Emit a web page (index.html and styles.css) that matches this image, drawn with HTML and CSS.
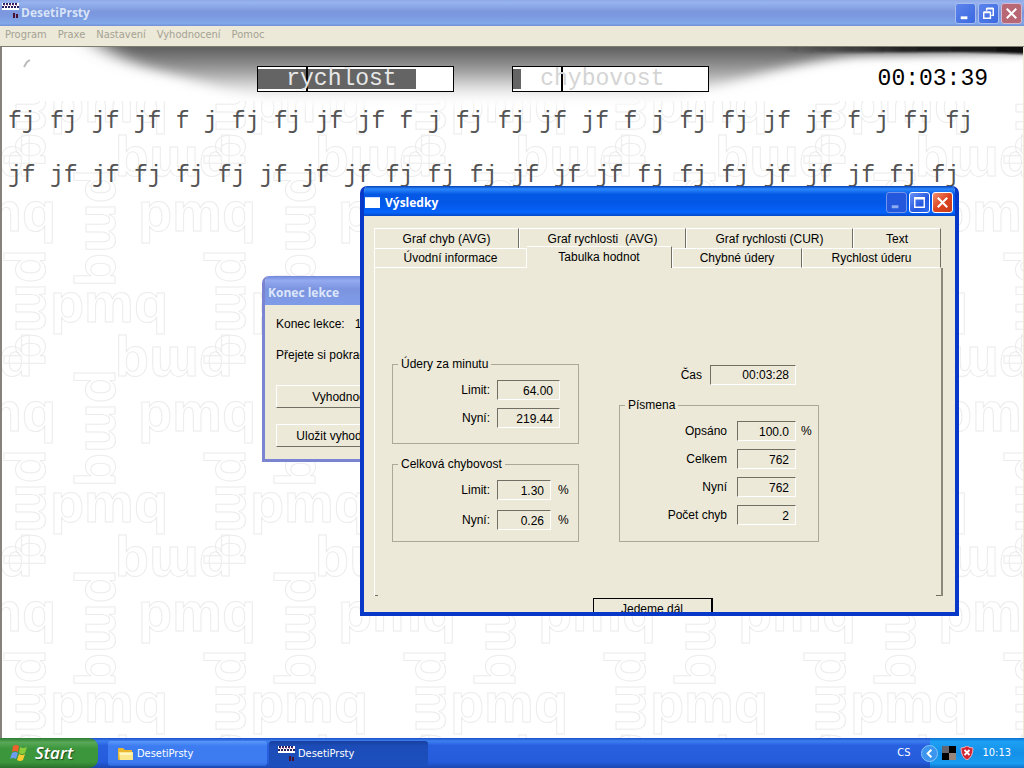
FILE: index.html
```html
<!DOCTYPE html>
<html lang="cs">
<head>
<meta charset="utf-8">
<title>DesetiPrsty</title>
<link rel="stylesheet" href="styles.css">
</head>
<body>
<svg class="defs" width="0" height="0" aria-hidden="true">
  <symbol id="app-icon" viewBox="0 0 18 16">
    <rect width="17" height="7" fill="#fff"/>
    <path d="M1 1h15M0 4h17" stroke="#26205e" stroke-width="2" stroke-dasharray="2 1"/>
    <path d="M2 2h14" stroke="#b0306a" stroke-dasharray="1 2"/>
    <path d="M11 10h2v5h-2zM14 11h2v4h-2z" fill="#4a1030"/>
  </symbol>
</svg>
<div class="desktop">
  <header class="titlebar titlebar-main">
    <svg class="app-icon" aria-hidden="true"><use href="#app-icon"/></svg>
    <h1 class="title">DesetiPrsty</h1>
    <div class="controls">
      <button class="ctl ctl-dim" aria-label="Minimalizovat"><svg viewBox="0 0 20 20"><path d="M5 13h7v3H5z" fill="#fff"/></svg></button>
      <button class="ctl ctl-dim" aria-label="Obnovit"><svg viewBox="0 0 20 20" fill="none" stroke="#fff"><path d="M8 7V5h7v7h-2M8 4.500h7" stroke-width="1.500"/><path d="M5 9h7v6H5zM5 8.500h7" stroke-width="1.500"/></svg></button>
      <button class="ctl ctl-close-dim" aria-label="Zavřít"><svg viewBox="0 0 20 20"><path d="M5 5l10 10M15 5L5 15" stroke="#fff" stroke-width="2.200"/></svg></button>
    </div>
  </header>
  <nav class="menubar">
    <a href="#">Program</a><a href="#">Praxe</a><a href="#">Nastavení</a><a href="#">Vyhodnocení</a><a href="#">Pomoc</a>
  </nav>

  <main class="workspace">
    <svg class="wallpaper" aria-hidden="true">
      <defs>
        <g id="motif" class="motif">
          <text id="pmq" x="0 34 84">pmq</text>
        </g>
        <g id="tile">
          <use href="#motif" transform="translate(138 31)"/>
          <use href="#motif" transform="translate(50 122)"/>
          <use href="#motif" transform="translate(233 147) rotate(180)"/>
          <use href="#motif" transform="translate(16 249) rotate(90)"/>
          <use href="#motif" transform="translate(86 169) rotate(90)"/>
        </g>
        <pattern id="paper" width="200" height="200" patternUnits="userSpaceOnUse" patternTransform="translate(-2 -47)">
          <use href="#tile"/>
          <use href="#tile" x="-200"/>
          <use href="#tile" y="-200"/>
          <use href="#tile" x="-200" y="-200"/>
        </pattern>
      </defs>
      <rect width="100%" height="100%" fill="url(#paper)"/>
    </svg>
    <svg class="smoke" viewBox="0 0 1022 64" preserveAspectRatio="none" aria-hidden="true">
      <defs>
        <linearGradient id="fade" gradientUnits="userSpaceOnUse" x1="0" y1="0" x2="0" y2="54">
          <stop offset="0" stop-color="#5c5c5c"/><stop offset=".45" stop-color="#a0a0a0"/><stop offset=".8" stop-color="#e8e8e8"/><stop offset="1" stop-color="#fff"/>
        </linearGradient>
        <linearGradient id="edge"><stop offset="0" stop-color="#222" stop-opacity="0"/><stop offset=".45" stop-color="#222"/><stop offset="1" stop-color="#080808"/></linearGradient>
        <filter id="soft" x="-10%" y="-50%" width="120%" height="200%"><feGaussianBlur stdDeviation="14 5"/></filter>
        <filter id="fine" x="-10%" y="-100%" width="120%" height="300%"><feGaussianBlur stdDeviation="2 1"/></filter>
      </defs>
      <rect width="1022" height="54" fill="#fff"/>
      <path d="M82 -16C105 6 125 17 165 26S230 50 300 58H640C700 48 760 20 850 9L1060 5V-16z" fill="url(#fade)" filter="url(#soft)"/>
      <path d="M780 -6H1050V9C970 2 900 7 780 5z" fill="url(#edge)" filter="url(#fine)"/>
      <path d="M22 20l3-5 3-2" fill="none" stroke="#bbb" stroke-width="2"/>
    </svg>

    <div class="practice">
      <div class="status">
        <div class="meter"><div class="meter-fill" style="width:81%"></div><div class="meter-mark"></div><span class="meter-label meter-label-speed">rychlost</span></div>
        <div class="meter"><div class="meter-fill" style="width:4%"></div><div class="meter-mark"></div><span class="meter-label meter-label-error">chybovost</span></div>
        <time class="clock">00:03:39</time>
      </div>
      <p class="line line-first">fj fj jf jf f j fj fj jf jf f j fj fj jf jf f j fj fj jf jf f j fj fj</p>
      <p class="line line-second">jf jf jf fj fj fj jf jf jf fj fj fj jf jf jf fj fj fj jf jf jf fj fj</p>
    </div>
  </main>

  <section class="window window-end" aria-label="Konec lekce">
    <header class="titlebar titlebar-end"><h2 class="title">Konec lekce</h2></header>
    <div class="end-body">
      <p>Konec lekce: &nbsp; 1</p>
      <p>Přejete si pokračovat?</p>
      <button class="push">Vyhodnocení</button>
      <button class="push">Uložit vyhodnocení</button>
    </div>
  </section>

  <section class="window window-results" aria-label="Výsledky">
    <header class="titlebar titlebar-results">
      <svg class="doc-icon" viewBox="0 0 16 12" aria-hidden="true"><rect width="15" height="11" fill="#fff"/><path d="M0 .5h15" stroke="#cfe0ff"/></svg>
      <h2 class="title">Výsledky</h2>
      <div class="controls">
        <button class="ctl ctl-off" aria-label="Minimalizovat"><svg viewBox="0 0 20 20"><path d="M5 13h7v3H5z" fill="#8fabf2"/></svg></button>
        <button class="ctl" aria-label="Maximalizovat"><svg viewBox="0 0 20 20"><path d="M5 5h10v10H5zM5 6h10" fill="none" stroke="#fff" stroke-width="1.500"/></svg></button>
        <button class="ctl ctl-close" aria-label="Zavřít"><svg viewBox="0 0 20 20"><path d="M5 5l10 10M15 5L5 15" stroke="#fff" stroke-width="2.200"/></svg></button>
      </div>
    </header>
    <div class="results-body">
      <div class="tabs" role="tablist">
        <div class="tab-row tab-row-back">
          <button class="tab" role="tab">Graf chyb (AVG)</button>
          <button class="tab" role="tab">Graf rychlosti &nbsp;(AVG)</button>
          <button class="tab" role="tab">Graf rychlosti (CUR)</button>
          <button class="tab" role="tab">Text</button>
        </div>
        <div class="tab-row tab-row-front">
          <button class="tab tab-intro" role="tab">Úvodní informace</button>
          <button class="tab tab-active" role="tab" aria-selected="true">Tabulka hodnot</button>
          <button class="tab" role="tab">Chybné údery</button>
          <button class="tab" role="tab">Rychlost úderu</button>
        </div>
      </div>
      <div class="panel" role="tabpanel">
        <div class="col">
          <fieldset class="group group-rate">
            <legend>Údery za minutu</legend>
            <label for="r1">Limit:</label><input id="r1" readonly value="64.00">
            <label for="r2">Nyní:</label><input id="r2" readonly value="219.44">
          </fieldset>
          <fieldset class="group group-error">
            <legend>Celková chybovost</legend>
            <label for="e1">Limit:</label><input id="e1" readonly value="1.30"><span>%</span>
            <label for="e2">Nyní:</label><input id="e2" readonly value="0.26"><span>%</span>
          </fieldset>
        </div>
        <div class="col">
          <div class="time-row"><label for="t1">Čas</label><input id="t1" readonly value="00:03:28"></div>
          <fieldset class="group group-letters">
            <legend>Písmena</legend>
            <label for="p1">Opsáno</label><input id="p1" readonly value="100.0"><span>%</span>
            <label for="p2">Celkem</label><input id="p2" readonly value="762">
            <label for="p3">Nyní</label><input id="p3" readonly value="762">
            <label for="p4">Počet chyb</label><input id="p4" readonly value="2">
          </fieldset>
        </div>
      </div>
      <button class="push push-default">Jedeme dál</button>
    </div>
  </section>

  <footer class="taskbar">
    <button class="start">
      <svg viewBox="0 0 20 20" aria-hidden="true"><path d="M3 3q3-2 6 0L8 9Q5 7 2 9z" fill="#f0602c"/><path d="M10 4q3 2 7 0l-2 6q-3 2-6 0z" fill="#8ccc3c"/><path d="M2 10q3-2 6 0l-2 6q-3-2-6 0z" fill="#6c9cf4"/><path d="M9 11q3 2 6 0l-2 6q-3 2-6 0z" fill="#f8cc30"/></svg>
      <span>Start</span>
    </button>
    <div class="tasks">
      <button class="task">
        <svg viewBox="0 0 18 16" aria-hidden="true"><path d="M1 3q0-1 1-1h4l2 2h7v10H2q-1 0-1-1z" fill="#e8b830"/><path d="M2 6h14v8H3z" fill="#fce88c"/><path d="M3 7h12v2H3z" fill="#fff6c0"/></svg>
        DesetiPrsty</button>
      <button class="task task-active"><svg viewBox="0 0 18 16" aria-hidden="true"><use href="#app-icon"/></svg>DesetiPrsty</button>
    </div>
    <span class="lang">CS</span>
    <div class="tray">
      <button class="chevron" aria-label="Zobrazit skryté ikony"><svg viewBox="0 0 18 18"><circle cx="9" cy="9" r="8.500" fill="#3c96f0" stroke="#8cc8fc"/><path d="M11 5L7 9l4 4" fill="none" stroke="#fff" stroke-width="2"/></svg></button>
      <svg class="tray-icon" viewBox="0 0 14 14" aria-hidden="true"><path d="M0 0h7v7H0z" fill="#64646c"/><path d="M7 0h7v7H7zM0 7h7v7H0z" fill="#000"/><path d="M7 7h7v7H7z" fill="#98867c"/></svg>
      <svg class="tray-icon" viewBox="0 0 14 14" aria-hidden="true"><path d="M7 0q3 2 6 2 0 9-6 12Q1 11 1 2q3 0 6-2z" fill="#d42434" stroke="#f0b0b0"/><path d="M4.500 4l5 5M9.500 4l-5 5" stroke="#fff" stroke-width="1.800"/></svg>
      <time>10:13</time>
    </div>
  </footer>
</div>
</body>
</html>
```
FILE: styles.css
```css
* { box-sizing: border-box; }
body { margin: 0; font: 12px/16px "Liberation Sans", Arial, sans-serif; color: #000; background: #fff; }
h1, h2, p { margin: 0; font-weight: inherit; font-size: inherit; }
button, input { font: inherit; color: inherit; border: 0; border-radius: 0; padding: 0; margin: 0; background: none; }
svg { display: block; }
.defs { position: absolute; }

.desktop { position: relative; display: flex; flex-direction: column; height: 100vh; overflow: hidden; }

/* Title bars */
.titlebar { display: flex; align-items: center; flex: none; color: #fff; }
.titlebar .title { flex: 1; font: bold 12px/16px "Open Sans", "Noto Sans", sans-serif; }
.titlebar-main { height: 26px; padding: 0 2px; gap: 1px; color: #d8e4f8; background: linear-gradient(#8fa9e6, #97b4ef 10%, #7c97dc 45%, #7b98e0 60%, #82a8e8 90%, #7290d8); }
.app-icon { width: 18px; height: 16px; margin-bottom: 4px; }
.controls { display: flex; gap: 2px; }
.ctl { width: 21px; height: 21px; border: 1px solid #fff; border-radius: 3px; background: linear-gradient(135deg, #6a92f4, #2458e0 60%, #2c6cf0); }
.ctl svg { width: 100%; height: 100%; }
.ctl-dim { border-color: #a8bcf0; background: linear-gradient(135deg, #5c84ec, #3a68e0); }
.ctl-off { border-color: #7494ec; background: #2358dc; }
.ctl-close { background: linear-gradient(135deg, #f09070, #dc4420 50%, #c83c1c); }
.ctl-close-dim { border-color: #d4b8d0; background: #b86874; }

.menubar { display: flex; flex: none; gap: 11px; height: 21px; padding: 1px 5px 0; background: #ece9d8; border-bottom: 1px solid #807c70; }
.menubar a { color: #a4a294; text-decoration: none; font: 11px/16px "DejaVu Sans Condensed", "Noto Sans", sans-serif; }

/* Typing area */
.workspace { position: relative; flex: 1; overflow: hidden; border-left: 2px solid #84827a; border-right: 1px solid #ece9d8; }
.wallpaper { position: absolute; inset: 0; width: 100%; height: 100%; }
.motif { font: bold 56px "Liberation Sans", Arial, sans-serif; fill: none; stroke: #ececec; stroke-width: 1; }
.smoke { position: absolute; top: 0; left: 0; width: 100%; height: 64px; }
.practice { position: relative; font: 23px/28px "Liberation Mono", "Courier New", monospace; }
.status { display: flex; align-items: center; padding: 18px 35px 0 25%; gap: 58px; }
.meter { position: relative; width: 197px; height: 26px; border: 1px solid #000; background: #fff; padding: 2px 0; }
.meter-fill { height: 20px; background: #646464; }
.meter-mark { position: absolute; top: 0; left: 48px; width: 2px; height: 24px; background: #000; }
.meter-label { position: absolute; inset: 0; line-height: 24px; }
.meter-label-speed { left: 28px; color: #e8e8e8; }
.meter-label-error { left: 27px; color: #d4d4d4; }
.clock { margin-left: auto; }
.line { color: #545454; text-align-last: justify; margin-left: 6px; }
.line-first { margin-top: 15px; margin-right: 50px; }
.line-second { margin-top: 26px; margin-right: 64px; }

/* Windows */
.window { position: absolute; overflow: hidden; display: flex; flex-direction: column; border-radius: 7px 7px 0 0; background: #ece9d8; }
.window-end { left: 262px; top: 276px; width: 180px; border: 3px solid #7b84d0; border-top: 0; }
.titlebar-end { height: 29px; padding: 4px 3px 0; color: #dce6fa; background: linear-gradient(#7088dc, #94aaf0 15%, #7c94e0 45%, #7f9ce8); }
.end-body { display: flex; flex-direction: column; padding: 11px 11px 12px; }
.end-body p { white-space: nowrap; margin-bottom: 15px; }
.push { height: 23px; text-align: center; white-space: nowrap; border: 1px solid; border-color: #fff #716f64 #716f64 #fff; }
.end-body .push { width: 142px; margin-top: 7px; }
.end-body .push + .push { margin-top: 16px; }

.window-results { left: 360px; top: 186px; width: 599px; height: 430px; border: 4px solid #0838c8; border-top: 0; }
.titlebar-results { height: 30px; padding: 3px 2px 0 1px; gap: 4px; background: linear-gradient(#0840b8, #2c88fc 10%, #0458e4 28%, #0458e8 60%, #0464fc 88%, #0448c8); }
.doc-icon { width: 16px; height: 12px; }
.results-body { flex: 1; min-height: 0; display: flex; flex-direction: column; padding: 12px 12px 0 10px; }
.tabs { flex: none; }
.tab-row { display: grid; height: 20px; padding-right: 2px; }
.tab-row-back { grid-template-columns: 145fr 167fr 167fr 88fr; }
.tab-row-front { grid-template-columns: 153fr 145fr 130fr 139fr; }
.tab { white-space: pre; border: 1px solid #fff; border-right-color: #716f64; border-bottom: 0; }
.tab-row-front .tab { border-bottom: 1px solid #fff; }
.tab-row-front .tab-intro { border-right-color: #fff; }
.tab-row-front .tab-active { margin-top: -2px; padding-bottom: 1px; background: #ece9d8; border-left: 0; border-bottom: 0; }
.panel { display: grid; grid-template-columns: 187px 200px; column-gap: 40px; padding: 88px 17px 0; height: 328px; flex: none; border-left: 1px solid #fff; border-right: 2px solid #8a887a; background: linear-gradient(#716f64, #716f64) left bottom / 3px 1px no-repeat, linear-gradient(#716f64, #716f64) right bottom / 5px 1px no-repeat; }
.col { display: flex; flex-direction: column; gap: 12px; }
.group { display: grid; align-content: start; align-items: center; margin: 0; min-width: 0; border: 1px solid #aca899; row-gap: 8px; }
.group legend { margin-left: 5px; padding: 0 3px; line-height: 16px; }
.group label { text-align: right; grid-column: 1; }
.panel input { width: 100%; height: 20px; padding: 1px 6px 0; text-align: right; border: 1px solid; border-color: #716f64 #fff #fff #716f64; outline: 0; }
.group-rate { grid-template-columns: 97px 63px; column-gap: 7px; padding: 8px 0 14px; height: 88px; }
.group-error { grid-template-columns: 97px 54px 12px; column-gap: 7px; padding: 8px 0 10px; row-gap: 10px; height: 86px; }
.time-row { display: grid; grid-template-columns: 83px 86px; gap: 8px; align-items: center; margin-top: 8px; height: 21px; }
.time-row label { text-align: right; }
.group-letters { grid-template-columns: 107px 59px 12px; column-gap: 10px; padding: 8px 0 14px; height: 145px; }
.group-letters span { margin-left: -5px; }
.push-default { flex: none; align-self: center; width: 120px; height: 22px; margin: 2px 12px 0 0; border: 1px solid #000; border-right-width: 2px; }

/* Taskbar */
.taskbar { display: flex; align-items: stretch; flex: none; height: 30px; color: #fff; font: 11px/16px "DejaVu Sans Condensed", "Noto Sans", sans-serif; background: linear-gradient(#1c50c8, #3c80f0 10%, #2860e0 25%, #245cdc 80%, #1c48b0); }
.start { display: flex; align-items: center; gap: 5px; width: 98px; padding: 0 10px; border-radius: 0 9px 9px 0; font: italic 600 17px/24px "Open Sans", "Noto Sans", sans-serif; text-shadow: 1px 1px 1px #1c4c1c; background: linear-gradient(#2f7c34, #58a858 15%, #3c963c 35%, #3c963c 80%, #2a702c); }
.start svg { width: 20px; height: 20px; }
.tasks { flex: 1; display: flex; gap: 2px; padding: 3px 0 2px 10px; }
.task { display: flex; align-items: center; gap: 2px; width: 159px; padding: 0 9px; border-radius: 3px; background: linear-gradient(#5c98fc, #3c7cf0 20%, #3c7cf0 85%, #2c68dc); }
.task svg { width: 18px; height: 16px; }
.task-active { background: linear-gradient(#1840a0, #1c4cb8 20%, #1c50bc); }
.lang { align-self: center; margin-right: 20px; }
.tray { display: flex; align-items: center; gap: 4px; padding-right: 13px; background: linear-gradient(#0c70d0, #1ca0f4 12%, #1490e8 50%, #189cf0 85%, #1070c8); }
.tray .chevron { width: 17px; height: 17px; margin-left: -9px; }
.tray-icon { width: 14px; height: 14px; }
.tray time { margin-left: 4px; }
```
